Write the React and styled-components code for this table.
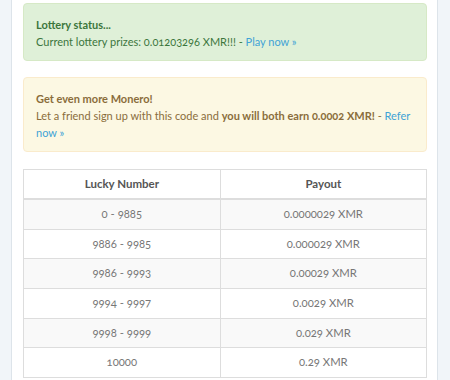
import React from "react";
import styled, { createGlobalStyle } from "styled-components";

const Global = createGlobalStyle`
  html, body { margin: 0; padding: 0; }
  body {
    background: #f1f5f9;
    font-family: Lato, "Open Sans", sans-serif;
    font-size: 11px;
    font-variant-numeric: oldstyle-nums;
  }
`;

const Panel = styled.div`
  margin: 0 12px 0 11px;
  background: #fff;
  border-left: 1px solid #dde4ea;
  border-right: 1px solid #dde4ea;
  padding: 3px 10px 4px 11px;
  height: 380px;
  box-sizing: border-box;
`;

const Alert = styled.div`
  border: 1px solid ${(p) => (p.$tone === "success" ? "#d6e9c6" : "#faebcc")};
  background: ${(p) => (p.$tone === "success" ? "#dff0d8" : "#fcf8e3")};
  color: ${(p) => (p.$tone === "success" ? "#3c763d" : "#8a6d3b")};
  border-radius: 4px;
  padding: 12px 11px 10px 12px;
  font-size: 11px;
  line-height: 17px;
  margin-bottom: ${(p) => p.$mb || 16}px;
`;

const Title = styled.div`
  font-weight: 700;
`;

const Strong = styled.b`
  font-weight: 700;
`;

const Link = styled.a`
  color: #3fa3d6;
  text-decoration: none;
`;

const Table = styled.table`
  width: 100%;
  border-collapse: collapse;
  border: 1px solid #ddd;
  color: #777;
  font-size: 11.3px;
`;

const Th = styled.th`
  font-weight: 700;
  font-size: 11.5px;
  color: #555;
  text-align: center;
  padding: 6px 8px;
  line-height: 16px;
  border: 1px solid #ddd;
  border-bottom-width: 2px;
  width: ${(p) => p.$w || "auto"};
`;

const Row = styled.tr`
  background: ${(p) => (p.$striped ? "#f9f9f9" : "#fff")};
`;

const Td = styled.td`
  text-align: center;
  padding: 6px 8px;
  line-height: 16.67px;
  border: 1px solid #ddd;
`;

const rows = [
  ["0 - 9885", "0.0000029 XMR"],
  ["9886 - 9985", "0.000029 XMR"],
  ["9986 - 9993", "0.00029 XMR"],
  ["9994 - 9997", "0.0029 XMR"],
  ["9998 - 9999", "0.029 XMR"],
  ["10000", "0.29 XMR"],
];

export default function App() {
  return (
    <>
      <Global />
      <Panel>
        <Alert $tone="success">
          <Title>Lottery status...</Title>
          Current lottery prizes: 0.01203296 XMR!!! - <Link href="#">Play now »</Link>
        </Alert>
        <Alert $tone="warning" $mb={17}>
          <Title>Get even more Monero!</Title>
          Let a friend sign up with this code and{" "}
          <Strong>you will both earn 0.0002 XMR!</Strong> - <Link href="#">Refer now »</Link>
        </Alert>
        <Table>
          <thead>
            <tr>
              <Th $w="48.8%">Lucky Number</Th>
              <Th>Payout</Th>
            </tr>
          </thead>
          <tbody>
            {rows.map((r, i) => (
              <Row key={i} $striped={i % 2 === 0}>
                <Td>{r[0]}</Td>
                <Td>{r[1]}</Td>
              </Row>
            ))}
          </tbody>
        </Table>
      </Panel>
    </>
  );
}
